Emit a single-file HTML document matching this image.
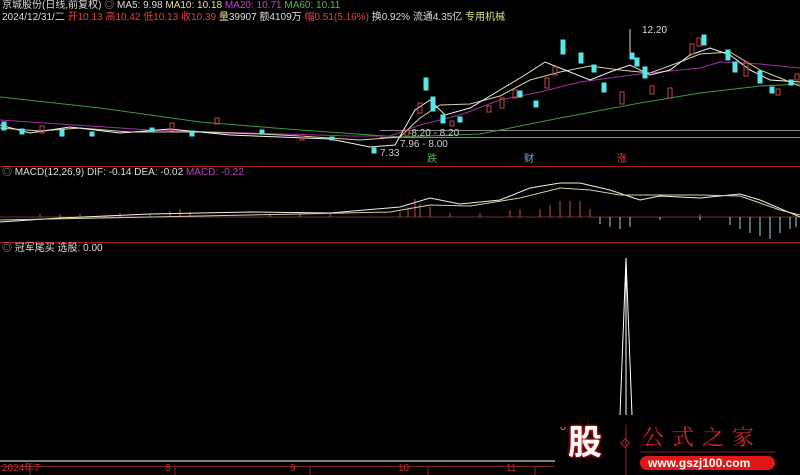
<!DOCTYPE html>
<html><head><meta charset="utf-8"><style>
html,body{margin:0;padding:0;background:#000;width:800px;height:475px;overflow:hidden}
.t{position:absolute;font-family:"Liberation Sans","Noto Sans CJK SC",sans-serif;font-size:10px;white-space:nowrap;line-height:12px}
</style></head><body>
<svg width="800" height="475" style="position:absolute;left:0;top:0" xmlns="http://www.w3.org/2000/svg">
<!-- separators -->
<line x1="0" y1="166.5" x2="800" y2="166.5" stroke="#a01818"/>
<line x1="0" y1="242.5" x2="800" y2="242.5" stroke="#a01818"/>
<line x1="380" y1="130.5" x2="800" y2="130.5" stroke="#888"/>
<line x1="380" y1="137.5" x2="800" y2="137.5" stroke="#888"/>
<!-- MA lines -->
<polyline fill="none" stroke="#3c9a3c" stroke-width="1" points="0,97 100,108 200,122 300,130 400,137 480,134 560,118 640,103 700,93 760,86 800,84"/>
<polyline fill="none" stroke="#a030a0" stroke-width="1" points="0,120 60,124 150,130 250,133 350,136 390,136 420,125 460,115 500,100 540,92 580,82 640,74 700,68 720,62 760,64 800,68"/>
<polyline fill="none" stroke="#d8d0a0" stroke-width="1" points="0,128 40,131 80,128 130,132 200,132 260,134 300,136 360,140 400,137 420,118 440,105 470,104 500,96 530,80 560,72 590,66 620,70 650,73 680,62 700,54 730,52 760,70 790,82 800,86"/>
<polyline fill="none" stroke="#f0f0f0" stroke-width="1" points="0,125 30,133 70,127 120,133 170,129 230,135 280,137 330,139 370,147 395,145 415,110 430,100 445,115 470,108 500,90 525,75 545,62 565,70 590,80 610,72 630,65 650,75 670,70 690,55 710,48 730,55 750,70 770,80 800,82"/>
<!-- candles -->
<g stroke-width="1">
<g fill="#55e8e8" stroke="#55e8e8">
<rect x="2" y="122" width="4" height="8"/><rect x="20" y="129" width="4" height="5"/><rect x="60" y="130" width="4" height="6"/><rect x="90" y="132" width="4" height="4"/><rect x="150" y="128" width="4" height="4"/><rect x="190" y="131" width="4" height="5"/><rect x="260" y="130" width="4" height="3"/><rect x="330" y="137" width="4" height="3"/><rect x="372" y="148" width="4" height="5"/>
<rect x="424" y="78" width="4" height="12"/><rect x="431" y="97" width="4" height="14"/><rect x="441" y="115" width="4" height="8"/><rect x="458" y="117" width="4" height="5"/><rect x="518" y="91" width="4" height="6"/><rect x="534" y="101" width="4" height="6"/><rect x="561" y="40" width="4" height="14"/><rect x="579" y="53" width="4" height="10"/><rect x="592" y="65" width="4" height="7"/><rect x="602" y="83" width="4" height="9"/><rect x="630" y="53" width="4" height="6"/><rect x="635" y="58" width="4" height="8"/><rect x="643" y="67" width="4" height="11"/><rect x="702" y="35" width="4" height="10"/><rect x="726" y="50" width="4" height="10"/><rect x="733" y="62" width="4" height="10"/><rect x="758" y="71" width="4" height="12"/><rect x="770" y="87" width="4" height="6"/><rect x="789" y="80" width="4" height="5"/>
</g>
<g fill="none" stroke="#c04848">
<rect x="40" y="126" width="4" height="7"/><rect x="170" y="123" width="4" height="8"/><rect x="215" y="118" width="4" height="6"/><rect x="300" y="136" width="4" height="4"/><rect x="405" y="130" width="4" height="6"/><rect x="418" y="103" width="4" height="10"/><rect x="450" y="121" width="4" height="5"/><rect x="487" y="106" width="4" height="6"/><rect x="500" y="98" width="4" height="10"/><rect x="513" y="90" width="4" height="8"/><rect x="545" y="78" width="4" height="10"/><rect x="553" y="67" width="4" height="8"/><rect x="620" y="92" width="4" height="12"/><rect x="650" y="86" width="4" height="8"/><rect x="668" y="88" width="4" height="10"/><rect x="690" y="44" width="4" height="10"/><rect x="697" y="38" width="4" height="8"/><rect x="744" y="62" width="4" height="14"/><rect x="776" y="89" width="4" height="6"/><rect x="795" y="74" width="4" height="6"/>
</g>
<line x1="630" y1="29" x2="630" y2="53" stroke="#ddd"/>
<line x1="626" y1="260" x2="626" y2="415" stroke="#fff"/>
<polyline points="620,415 626,258 632,415" fill="none" stroke="#fff"/>
</g>
<!-- MACD -->
<line x1="0" y1="217" x2="800" y2="217" stroke="#703030"/>
<g stroke="#c05050">
<path d="M40 217v-3M60 217v-3M80 217v-3M120 217v-4M150 217v-3M170 217v-6M180 217v-8M190 217v-5M270 217v-3M300 217v-3M330 217v-4M400 217v-5M408 217v-10M415 217v-18M420 217v-13M430 217v-10M450 217v-4M480 217v-4M510 217v-7M520 217v-8M540 217v-8M550 217v-12M560 217v-16M570 217v-16M580 217v-16M590 217v-8M700 217v-3"/>
</g>
<g stroke="#a0d8e0">
<path d="M600 217v7M610 217v10M620 217v12M630 217v10M660 217v3M700 217v3M730 217v8M740 217v12M750 217v16M760 217v19M770 217v22M780 217v16M790 217v12M796 217v10"/>
</g>
<polyline fill="none" stroke="#eee" points="0,222 60,218 150,214 250,212 330,213 400,207 430,198 460,204 500,200 530,188 560,183 580,183 610,190 640,200 660,196 700,198 740,194 760,200 800,217"/>
<polyline fill="none" stroke="#d8d0a0" points="0,220 100,218 200,216 300,214 390,212 430,205 470,206 520,198 560,188 590,190 620,195 700,195 740,196 780,210 800,215"/>
<!-- axis -->
<line x1="0" y1="461" x2="555" y2="461" stroke="#aaa" stroke-width="1.5"/>
<line x1="0" y1="466.5" x2="555" y2="466.5" stroke="#802020"/>
<g stroke="#a02020"><path d="M30 466v9M175 466v9M310 466v9M428 466v9M535 466v9"/></g>
<line x1="626" y1="425" x2="626" y2="475" stroke="#a02020"/>
<rect x="622" y="440" width="6" height="6" transform="rotate(45 625 443)" fill="none" stroke="#c02020"/>
<line x1="640" y1="452" x2="775" y2="452" stroke="#802020"/>
<rect x="640" y="456" width="135" height="14" rx="7" fill="#e01818"/>
</svg>
<div class="t" style="left:2px;top:0;color:#ddd">京城股份(日线,前复权) <span style="color:#aaa">◎</span> MA5: 9.98 <span style="color:#e0e0a0">MA10: 10.18</span> <span style="color:#d040d0">MA20: 10.71</span> <span style="color:#50c050">MA60: 10.11</span></div>
<div class="t" style="left:2px;top:12px;color:#ddd">2024/12/31/二 <span style="color:#e04040">开10.13 高10.42 低10.13 收10.39</span> <span style="color:#e0e080">量</span>39907 额4109万 <span style="color:#e04040">幅0.51(5.16%)</span> 换0.92% 流通4.35亿 <span style="color:#e0e080">专用机械</span></div>
<div class="t" style="left:642px;top:25px;color:#ddd">12.20</div>
<div class="t" style="left:380px;top:148px;color:#ccc">7.33</div>
<div class="t" style="left:408px;top:128px;color:#ccc">-8.20 - 8.20</div>
<div class="t" style="left:400px;top:139px;color:#ccc">7.96 - 8.00</div>
<div class="t" style="left:427px;top:154px;color:#40c040">跌</div>
<div class="t" style="left:524px;top:154px;color:#80b0e0">财</div>
<div class="t" style="left:617px;top:154px;color:#e04040">涨</div>
<div class="t" style="left:2px;top:167px;color:#ddd"><span style="color:#aaa">◎</span> MACD(12,26,9) DIF: -0.14 DEA: -0.02 <span style="color:#c040c0">MACD: -0.22</span></div>
<div class="t" style="left:2px;top:243px;color:#ddd"><span style="color:#aaa">◎</span> 冠军尾买 选股: 0.00</div>
<div class="t" style="left:2px;top:463px;color:#c03030">2024年7</div>
<div class="t" style="left:165px;top:463px;color:#c03030">8</div>
<div class="t" style="left:290px;top:463px;color:#c03030">9</div>
<div class="t" style="left:398px;top:463px;color:#c03030">10</div>
<div class="t" style="left:506px;top:463px;color:#c03030">11</div>
<div class="t" style="left:568px;top:423px;font-size:34px;line-height:40px;font-weight:bold;color:#fff;text-shadow:0 0 3px #e02020,0 0 3px #e02020">股</div>
<div class="t" style="left:560px;top:424px;font-size:16px;color:#f0a000">ᵕ</div>
<div class="t" style="left:642px;top:424px;font-size:22px;line-height:26px;color:#e02020;letter-spacing:8px;font-family:'Noto Serif CJK SC',serif">公式之家</div>
<div class="t" style="left:648px;top:457px;font-size:12px;font-weight:bold;color:#fff">www.gszj100.com</div>
</body></html>
